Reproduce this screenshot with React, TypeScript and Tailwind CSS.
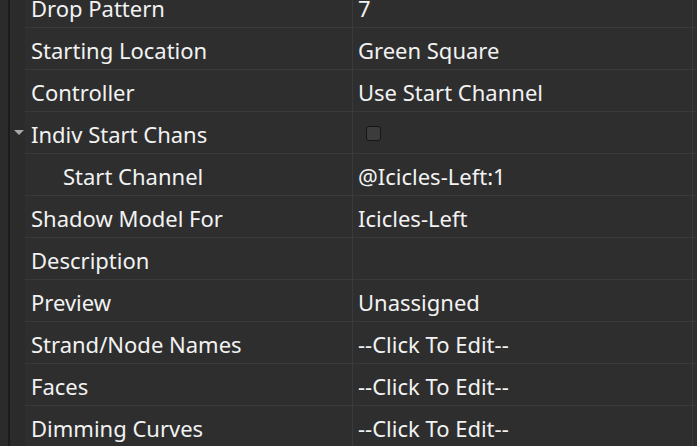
const rows: { label: string; value?: string; indent?: boolean; expander?: boolean; checkbox?: boolean }[] = [
  { label: "Drop Pattern", value: "7" },
  { label: "Starting Location", value: "Green Square" },
  { label: "Controller", value: "Use Start Channel" },
  { label: "Indiv Start Chans", expander: true, checkbox: true },
  { label: "Start Channel", value: "@Icicles-Left:1", indent: true },
  { label: "Shadow Model For", value: "Icicles-Left" },
  { label: "Description", value: "" },
  { label: "Preview", value: "Unassigned" },
  { label: "Strand/Node Names", value: "--Click To Edit--" },
  { label: "Faces", value: "--Click To Edit--" },
  { label: "Dimming Curves", value: "--Click To Edit--" },
];

export default function App() {
  return (
    <div
      className="w-[697px] h-[446px] overflow-hidden bg-[#2b2b2b] flex text-[#f2f2f2] text-[22px]"
      style={{ fontFamily: '"Noto Sans", "Open Sans", sans-serif' }}
    >
      <div className="w-[8px] shrink-0 bg-[#2b2b2b]" />
      <div className="w-[2px] shrink-0 bg-[#1c1c1c]" />
      <div className="flex-1 flex flex-col -mt-[14px]">
        {rows.map((r) => (
          <div key={r.label} className="flex h-[42px] shrink-0">
            <div className="w-[15px] shrink-0 flex items-center justify-center">
              {r.expander && (
                <svg width="10" height="6" viewBox="0 0 10 6" className="ml-[2px]">
                  <path d="M0 0 L10 0 L5 5 Z" fill="#a8a8a8" />
                </svg>
              )}
            </div>
            <div className="flex-1 flex bg-[#2e2e2e] border-b border-[#3a3a3a]">
              <div
                className={`w-[328px] shrink-0 flex items-center border-r border-[#3a3a3a] leading-none pt-[2px] ${
                  r.indent ? "pl-[38px]" : "pl-[6px]"
                }`}
              >
                {r.label}
              </div>
              <div className="flex-1 flex items-center pl-[5px] leading-none pt-[2px]">
                {r.checkbox ? (
                  <div className="ml-[8px] w-[15px] h-[15px] rounded-[3px] border border-[#161616] bg-[#3c3c3c]" />
                ) : (
                  r.value
                )}
              </div>
              <div className="w-[1px] shrink-0 bg-[#3a3a3a] mr-[4px]" />
            </div>
          </div>
        ))}
      </div>
    </div>
  );
}
